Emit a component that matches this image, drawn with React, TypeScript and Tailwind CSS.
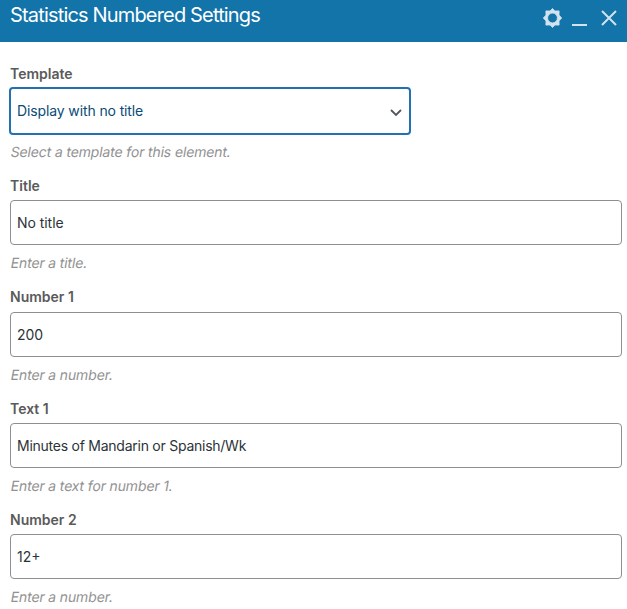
import React from "react";

const fields = [
  { label: "Title", value: "No title", hint: "Enter a title.", spacing: "tracking-[-0.05px]" },
  { label: "Number 1", value: "200", hint: "Enter a number.", spacing: "tracking-[-0.1px]" },
  { label: "Text 1", value: "Minutes of Mandarin or Spanish/Wk", hint: "Enter a text for number 1.", spacing: "tracking-[-0.25px]" },
  { label: "Number 2", value: "12+", hint: "Enter a number.", spacing: "tracking-[0px]" },
];

function Hint({ children }: { children: string }) {
  return (
    <p className="h-[20px] leading-[20px] tracking-[-0.15px] text-[#929292]">
      <span className="-ml-[0.5px] inline-block origin-[0_15px] -skew-x-[10deg]">{children}</span>
    </p>
  );
}

export default function App() {
  return (
    <div className="h-[609px] w-[627px] overflow-hidden bg-white font-['Inter',sans-serif] text-[14px]">
      <header className="flex h-[42px] justify-between bg-[#1274a9] pl-[10px] text-white">
        <h1 className="h-[30px] text-[20px] leading-[30px] tracking-[-0.83px]">Statistics Numbered Settings</h1>
        <div className="flex pr-[10px]">
          <svg width="75" height="42" viewBox="542 0 75 42" fill="none" stroke="#d0e3ee">
            <path
              d="M552.5 8.5l2.4 2.5 4.2-.1-.1 4.2 2.7 2.9-2.7 2.9.1 4.2-4.2-.1-2.4 2.5-2.4-2.5-4.2.1.1-4.2-2.7-2.9 2.7-2.9-.1-4.2 4.2.1z M552.5 13.1a4.9 4.9 0 1 0 0 9.8a4.9 4.9 0 1 0 0-9.8z"
              fill="#d0e3ee"
              fillRule="evenodd"
              strokeWidth=".8"
              strokeLinejoin="round"
            />
            <path d="M572 25h15" strokeWidth="2" />
            <path d="M602 11l14 14M616 11l-14 14" strokeWidth="2" />
          </svg>
        </div>
      </header>
      <main className="flex flex-col pl-[10px] pr-[5px] pt-[22px]">
        <label className="h-[23px] font-semibold leading-[20px] text-[#5a5a5a]">Template</label>
        <div className="-ml-px flex h-[48px] w-[402px] items-center justify-between rounded-[4px] border-2 border-[#2271b1] pl-[6px] pr-[7px] text-[#0a4b78]">
          <span className="pb-[2px] tracking-[-0.12px]">Display with no title</span>
          <svg className="mt-[3px]" width="12" height="8" viewBox="0 0 12 8" fill="none" stroke="#50575e" strokeWidth="1.8"><path d="M1 1l5 5 5-5" /></svg>
        </div>
        <div className="h-[26.85px] pt-[7px]">
          <Hint>Select a template for this element.</Hint>
        </div>
        {fields.map((f) => (
          <section key={f.label} className="mt-[14px] h-[97.4px]">
            <label className="block h-[24.4px] font-semibold leading-[20px] text-[#5a5a5a]">{f.label}</label>
            <div className={`mb-[8px] flex h-[45px] items-center rounded-[4px] border border-[#8c8f94] pl-[6px] text-[#2c3338] ${f.spacing}`}>{f.value}</div>
            <Hint>{f.hint}</Hint>
          </section>
        ))}
      </main>
    </div>
  );
}
